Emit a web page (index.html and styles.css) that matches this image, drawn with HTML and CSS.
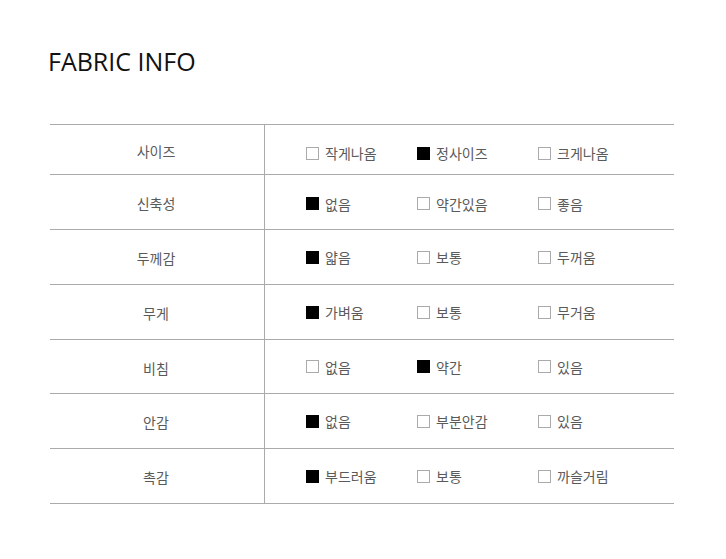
FILE: index.html
```html
<!DOCTYPE html>
<html lang="ko">
<head>
<meta charset="utf-8">
<link rel="stylesheet" href="styles.css">
</head>
<body>
<div class="page">
  <h1 class="title">FABRIC INFO</h1>
  <div class="table">
    <div class="row first">
      <div class="label">사이즈</div>
      <div class="opts">
        <span class="opt"><i class="box"></i>작게나옴</span>
        <span class="opt"><i class="box on"></i>정사이즈</span>
        <span class="opt"><i class="box"></i>크게나옴</span>
      </div>
    </div>
    <div class="row second">
      <div class="label">신축성</div>
      <div class="opts">
        <span class="opt"><i class="box on"></i>없음</span>
        <span class="opt"><i class="box"></i>약간있음</span>
        <span class="opt"><i class="box"></i>좋음</span>
      </div>
    </div>
    <div class="row">
      <div class="label">두께감</div>
      <div class="opts">
        <span class="opt"><i class="box on"></i>얇음</span>
        <span class="opt"><i class="box"></i>보통</span>
        <span class="opt"><i class="box"></i>두꺼움</span>
      </div>
    </div>
    <div class="row">
      <div class="label">무게</div>
      <div class="opts">
        <span class="opt"><i class="box on"></i>가벼움</span>
        <span class="opt"><i class="box"></i>보통</span>
        <span class="opt"><i class="box"></i>무거움</span>
      </div>
    </div>
    <div class="row short">
      <div class="label">비침</div>
      <div class="opts">
        <span class="opt"><i class="box"></i>없음</span>
        <span class="opt"><i class="box on"></i>약간</span>
        <span class="opt"><i class="box"></i>있음</span>
      </div>
    </div>
    <div class="row">
      <div class="label">안감</div>
      <div class="opts">
        <span class="opt"><i class="box on"></i>없음</span>
        <span class="opt"><i class="box"></i>부분안감</span>
        <span class="opt"><i class="box"></i>있음</span>
      </div>
    </div>
    <div class="row">
      <div class="label">촉감</div>
      <div class="opts">
        <span class="opt"><i class="box on"></i>부드러움</span>
        <span class="opt"><i class="box"></i>보통</span>
        <span class="opt"><i class="box"></i>까슬거림</span>
      </div>
    </div>
  </div>
</div>
</body>
</html>
```
FILE: styles.css
```css
html, body {
  margin: 0;
  padding: 0;
  background: #fff;
}
.page {
  padding: 45px 0 0 0;
}
.title {
  margin: 0 0 47px 48px;
  font-family: "Open Sans", "Liberation Sans", sans-serif;
  font-weight: 400;
  font-size: 25px;
  line-height: 32px;
  color: #111;
  letter-spacing: 0;
}
.table {
  margin-left: 50px;
  width: 624px;
  border-top: 1px solid #aaa;
  font-family: "Noto Sans CJK KR", "Noto Sans", sans-serif;
  font-size: 14px;
  color: #5a5a5a;
}
.row {
  display: grid;
  grid-template-columns: 215px 1fr;
  height: 54px;
  border-bottom: 1px solid #aaa;
}
.row.first {
  height: 49px;
}
.row.short {
  height: 53px;
}
.label {
  border-right: 1px solid #aaa;
  display: flex;
  align-items: center;
  justify-content: center;
  padding-top: 2px;
  padding-right: 2px;
}
.opts {
  display: grid;
  grid-template-columns: 111px 121px 1fr;
  align-items: center;
  padding-left: 41px;
}
.row.first .opts {
  padding-top: 7px;
}
.row.second .opts {
  padding-top: 3px;
}
.opt {
  display: flex;
  align-items: center;
  line-height: 18px;
}
.box {
  display: inline-block;
  width: 11px;
  height: 11px;
  border: 1px solid #aaa;
  margin-right: 6px;
  flex: none;
}
.box.on {
  width: 13px;
  height: 13px;
  border: none;
  background: #000;
}
```
